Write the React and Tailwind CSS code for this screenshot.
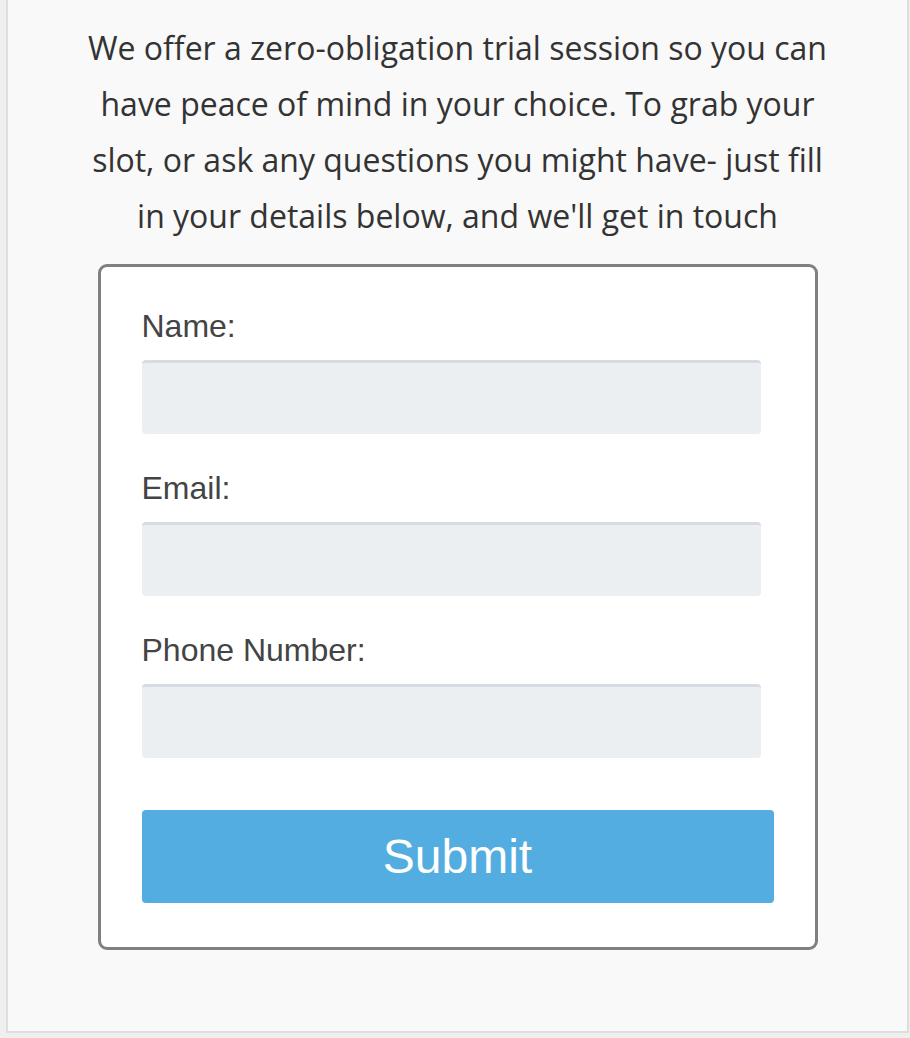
import React from "react";

function Field({ label, type = "text" }) {
  return (
    <div className="flex flex-col">
      <label className="text-[32px] leading-[36px] text-[#444444]">{label}</label>
      <input
        type={type}
        className="mt-4 h-[74px] w-[619px] rounded-[4px] border-t-[3px] border-[#d6dce1] bg-[#eceff2] px-3 focus:outline-none"
      />
    </div>
  );
}

export default function App() {
  return (
    <div className="h-[1038px] bg-[#efefef] pl-[6px] pr-px">
      <div className="h-[1033px] border-x-2 border-b-2 border-[#dedede] bg-[#f9f9f9] pt-[20px]">
        <p className="mx-auto w-[752px] text-center font-['Open_Sans',sans-serif] text-[32px] leading-[56px] text-[#333333]">
          We offer a zero-obligation trial session so you can have peace of mind in your choice. To grab your slot, or ask any questions you might have- just fill in your details below, and we'll get in touch
        </p>

        <form
          onSubmit={(e) => e.preventDefault()}
          className="mx-auto mt-5 flex w-[720px] flex-col gap-9 rounded-[9px] border-[3px] border-[#808080] bg-white px-[41px] pt-[41px] pb-[44px] font-['Liberation_Sans',Arial,sans-serif]"
        >
          <Field label="Name:" />
          <Field label="Email:" type="email" />
          <Field label="Phone Number:" type="tel" />
          <button
            type="submit"
            className="mt-4 flex h-[93px] w-full items-center justify-center rounded-[4px] bg-[#53ade0] text-[48px] text-white"
          >
            Submit
          </button>
        </form>
      </div>
    </div>
  );
}
